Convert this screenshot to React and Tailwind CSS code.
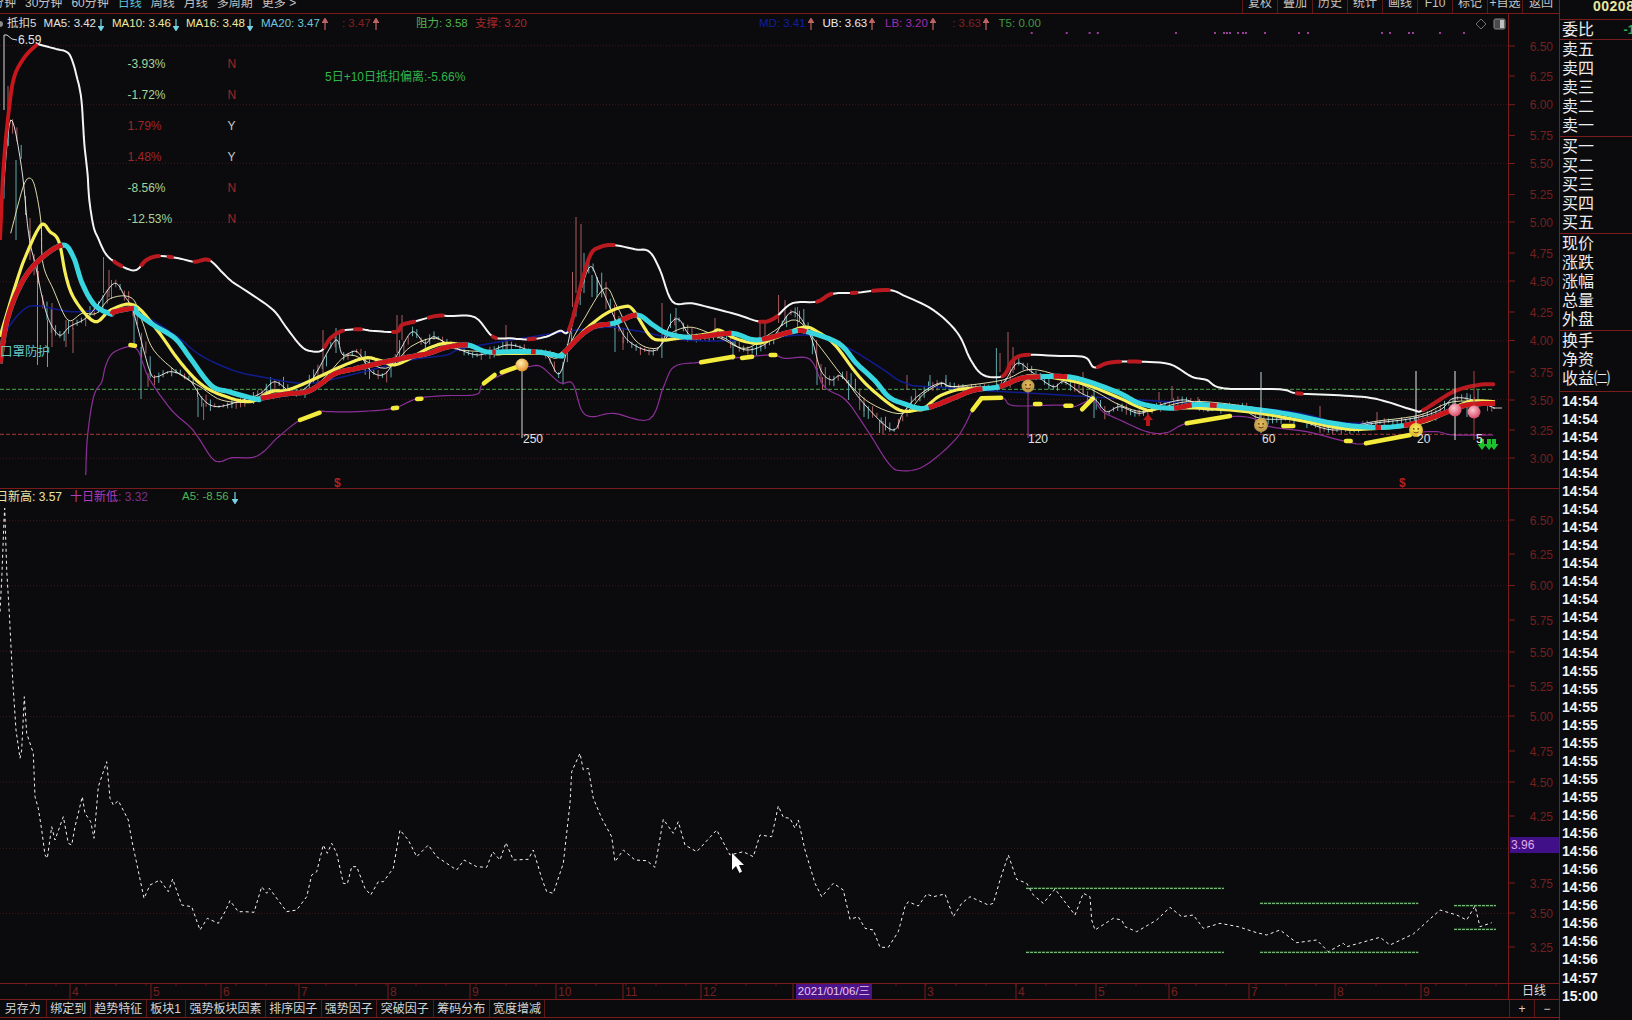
import React from "react";

const A = (p) => p.map(([x, y]) => [x / 2.8, y / 3]);
const B = (p) => p.map(([x, y]) => [x / 2.8, 240 + y / 3]);
const C = (p) => p.map(([x, y]) => [560 + x / 2.8, 240 + y / 3]);
const D = (p) => p.map(([x, y]) => [1120 + x / 3, 320 + y / 3]);
const bx = (v) => v / 2.8;
const cx = (v) => 560 + v / 2.8;
const dx = (v) => 1120 + v / 3;

function dense(pts) {
  const out = [];
  for (let i = 0; i < pts.length - 1; i++) {
    const p0 = pts[Math.max(i - 1, 0)];
    const p1 = pts[i];
    const p2 = pts[i + 1];
    const p3 = pts[Math.min(i + 2, pts.length - 1)];
    for (let k = 0; k < 6; k++) {
      const t = k / 6;
      const f = (a, b, c, d) =>
        0.5 * (2 * b + (c - a) * t + (2 * a - 5 * b + 4 * c - d) * t * t + (3 * b - a - 3 * c + d) * t * t * t);
      out.push([f(p0[0], p1[0], p2[0], p3[0]), f(p0[1], p1[1], p2[1], p3[1])]);
    }
  }
  out.push(pts[pts.length - 1]);
  return out;
}
const str = (pts) => pts.map(([x, y]) => `${x.toFixed(1)},${y.toFixed(1)}`).join(" ");
const slice = (pts, a, b) => pts.filter(([x]) => x >= a && x <= b);
const at = (pts, x) => {
  for (let i = 0; i < pts.length - 1; i++) {
    if (pts[i][0] <= x && pts[i + 1][0] >= x) return pts[i][1];
  }
  return pts[pts.length - 1][1];
};

const band = dense([
  ...A([[105,132],[150,145],[185,155],[200,175],[215,230],[228,300],[236,430],[245,520],[250,600],[262,680],[275,715]]),
  ...B([[295,40],[320,65],[360,88],[385,88],[410,60],[445,48],[500,55],[545,65],[585,60],[625,100],[650,125],[700,160],[765,210],[800,260],[840,315],[865,332],[900,332],[925,295],[960,272],[1010,268],[1040,272],[1110,275],[1125,255],[1160,245],[1220,228],[1260,228],[1330,232],[1380,290],[1430,295],[1480,298],[1530,290]]),
  ...C([[0,272],[25,270],[60,130],[85,45],[110,22],[150,15],[210,28],[250,35],[280,90],[315,185],[370,190],[440,208],[500,225],[560,245],[600,235],[650,190],[720,185],[760,162],[830,158],[920,150],[970,170],[1030,200],[1080,240],[1120,290],[1150,360],[1185,405],[1240,408],[1265,365],[1300,345],[1400,348],[1470,352],[1495,382],[1530,370]]),
  ...D([[0,125],[60,125],[150,133],[215,170],[260,180],[310,205],[480,208],[530,220],[640,225],[740,232],[800,245],[880,270],[910,270],[1000,215],[1075,195],[1120,193]]),
]);
const bandRed = [
  [bx(320),bx(345)],[bx(395),bx(445)],[bx(465),bx(490)],[bx(545),bx(585)],[bx(905),bx(965)],[bx(990),bx(1015)],[bx(1090),bx(1160)],[bx(1190),bx(1240)],[bx(1295),bx(1310)],[bx(1375),bx(1395)],[bx(1480),bx(1500)],
  [cx(25),cx(150)],[cx(560),cx(610)],[cx(720),cx(765)],[cx(805),cx(830)],[cx(865),cx(920)],[cx(1240),cx(1320)],[cx(1395),cx(1405)],[cx(1505),cx(1568)],
  [dx(25),dx(65)],[dx(530),dx(555)],[dx(620),dx(635)],[dx(910),dx(1120)],
];
const bandStart = dense(A([[0,720],[10,500],[25,330],[40,230],[70,170],[105,132]]));

const thick = dense([
  ...B([[0,370],[20,240],[60,130],[110,60],[175,15],[205,50],[230,130],[265,195],[310,222],[320,215],[375,205],[385,220],[430,255],[490,295],[530,350],[590,435],[640,455],[720,478],[730,475],[800,462],[860,455],[900,430],[940,400],[1000,385],[1060,370],[1140,352],[1200,340],[1250,322],[1310,315],[1360,335],[1420,335],[1500,335]]),
  ...C([[0,348],[10,340],[60,285],[100,258],[150,250],[215,225],[260,255],[300,280],[370,292],[480,280],[550,300],[650,275],[690,275],[780,310],[830,370],[880,420],[920,470],[960,490],[1020,505],[1100,475],[1160,450],[1230,440],[1290,415],[1345,410],[1420,410],[1480,425]]),
  ...D([[0,220],[60,250],[150,265],[215,255],[270,255],[420,270],[520,285],[640,310],[750,322],[840,318],[900,305],[970,280],[1040,255],[1125,250]]),
]);
const thickRed = [
  [0,bx(175)],[bx(312),bx(378)],[bx(730),bx(1312)],[bx(1370),bx(1395)],[bx(1480),bx(1510)],
  [cx(10),cx(148)],[cx(165),cx(222)],[cx(370),cx(482)],[cx(555),cx(650)],[cx(665),cx(695)],[cx(1025),cx(1190)],[cx(1230),cx(1345)],[cx(1375),cx(1420)],
  [dx(155),dx(215)],[dx(270),dx(312)],[dx(760),dx(790)],[dx(845),dx(1125)],
];
const yellow = dense([
  ...B([[0,290],[45,130],[75,40],[115,-45],[140,-25],[165,5],[185,110],[210,180],[265,245],[310,210],[375,195],[440,270],[500,360],[560,430],[620,465],[700,485],[760,455],[820,445],[1000,360],[1060,360],[1100,375],[1140,360],[1200,325],[1250,310],[1320,320],[1380,340],[1420,340],[1540,340]]),
  ...C([[0,345],[70,270],[130,220],[180,200],[205,210],[250,285],[280,300],[330,295],[420,280],[445,270],[490,295],[550,310],[600,295],[680,262],[720,275],[770,315],[830,400],[880,455],[950,510],[1000,510],[1020,505],[1060,470],[1110,450],[1160,445],[1230,440],[1300,410],[1340,408],[1420,420],[1490,440]]),
  ...D([[0,235],[80,270],[120,265],[250,265],[420,280],[640,320],[720,328],[900,310],[1020,255],[1060,243],[1125,245]]),
]);
const thin1 = dense([
  ...A([[10,560],[30,360],[60,500],[80,700]]),
  ...B([[100,80],[130,220],[165,285],[195,260],[240,235],[270,200],[320,130],[350,170],[370,205],[385,260],[420,395],[440,410],[480,395],[530,420],[570,480],[610,500],[680,480],[730,460],[770,425],[820,460],[860,440],[890,390],[940,300],[960,345],[1000,335],[1040,395],[1080,400],[1120,330],[1155,275],[1190,310],[1215,290],[1260,315],[1340,345],[1420,315],[1480,330],[1530,345]]),
  ...C([[0,400],[35,250],[80,85],[110,130],[160,250],[200,310],[270,330],[310,250],[335,240],[370,290],[450,290],[520,330],[590,300],[650,215],[700,285],[730,390],[760,420],[790,410],[850,490],[930,570],[960,520],[1000,470],[1060,430],[1100,440],[1200,440],[1240,430],[1280,370],[1320,395],[1380,440],[1410,425],[1460,460],[1500,480],[1530,515]]),
  ...D([[0,260],[60,280],[120,255],[200,240],[260,270],[350,260],[420,295],[530,300],[640,330],[760,310],[880,295],[960,270],[1000,235],[1060,240],[1125,265]]),
]);
const thin2 = dense([
  ...A([[30,700],[65,560],[85,535],[100,570],[115,670]]),
  ...B([[120,70],[150,150],[190,240],[230,220],[270,220],[310,175],[370,175],[400,250],[430,330],[500,400],[560,440],[620,480],[700,485],[760,450],[860,455],[920,400],[980,345],[1080,385],[1150,320],[1220,295],[1290,330],[1500,340]]),
  ...C([[0,350],[60,250],[125,145],[160,200],[210,300],[270,325],[310,280],[370,262],[450,295],[520,325],[590,280],[660,240],[720,310],[800,420],[870,490],[960,520],[1020,460],[1070,430],[1100,440],[1240,420],[1320,388],[1430,420],[1500,455]]),
  ...D([[0,255],[80,275],[200,245],[350,255],[520,285],[640,325],[760,305],[900,285],[1000,245],[1125,250]]),
]);
const navy = dense([
  ...B([[0,330],[20,270],[60,215],[100,197],[200,215],[300,210],[380,215],[490,285],[560,345],[650,390],[730,410],[860,430],[1000,400],[1150,360],[1250,345],[1320,320]]),
  ...C([[90,265],[200,270],[350,300],[530,300],[700,285],[800,320],[900,385],[970,430],[1100,445]]),
  ...D([[420,265],[640,305],[760,310]]),
]);
const purple = dense([
  ...B([[240,705],[245,590],[262,470],[285,425],[295,380],[315,340],[360,320],[385,330],[400,370],[420,420],[480,510],[540,570],[590,650],[615,665],[650,653],[720,648],[780,590],[840,540],[895,515],[920,515],[1000,515],[1100,505],[1170,475],[1250,467],[1335,463],[1355,430],[1450,385],[1480,380],[1515,380]]),
  ...C([[0,428],[35,430],[60,510],[90,530],[150,520],[250,538],[290,440],[320,380],[390,367],[480,355],[590,345],[630,355],[700,358],[740,440],[800,480],[860,570],[920,670],[955,692],[1020,678],[1110,595],[1155,510],[1180,475],[1240,475],[1270,497],[1400,495],[1440,500],[1490,480],[1520,515]]),
  ...D([[0,300],[80,335],[140,338],[200,310],[330,290],[400,295],[450,320],[560,335],[680,365],[740,370],[880,340],[950,335],[1000,345],[1120,345]]),
]);
const yellowBits = [
  B([[365,315],[378,317]]), B([[840,540],[895,518]]), B([[1100,505],[1112,503]]), B([[1168,477],[1180,476]]),
  B([[1355,430],[1385,405]]), B([[1405,397],[1450,380]]),
  C([[395,367],[485,350]]), C([[510,354],[538,350]]), C([[590,345],[603,345]]),
  C([[1155,510],[1180,475],[1235,473]]), C([[1330,492],[1345,492]]), C([[1415,497],[1432,497]]), C([[1462,508],[1492,475]]),
  D([[200,310],[330,288]]), D([[490,318],[520,318]]), D([[678,363],[692,363]]), D([[738,370],[870,345]]),
];

const R = "#a85f5f";
const G = "#5fa9ad";
const tallBars = [
  [8,86,110,R],[16,160,240,G],[30,218,260,R],[37.5,263,365,G],[47.5,320,367,G],[52,303,347,R],[66,320,347,R],[73,328,353,R],[103.5,257,293,R],[109,270,297,R],[134,312,347,G],[141,347,399,G],[148,373,387,R],[198,397,417,G],[203.6,403,420,R],[323,330,373,R],[336,328,353,G],[397,315,353,R],[402,315,340,R],[506,325,353,R],
  [576,217,293,R],[581,224,283,R],[572.5,272,307,R],[584,253,293,G],[592,275,297,G],[597,277,297,G],[615,320,352,G],[623,337,350,R],[662,303,340,R],[676,308,337,G],[715,318,337,R],[733,340,360,G],[760,320,343,R],[765,323,347,R],[778.6,295,323,R],[785,300,323,R],[797.5,307,333,R],[817,368,385,G],[822.5,377,390,R],[848.6,380,400,G],[864,403,417,G],[879.6,420,433,G],[883,421,434,R],[907,375,390,R],[930,375,387,G],[946,375,387,G],[996.4,348,387,G],[1000,353,372,R],[1008,332,370,R],[1013,347,373,R],[1094,390,418,G],[1083,372,393,R],
  [1159,392,403,R],[1172,386,400,R],[1198,397,407,R],[1320,406,433,R],[1377,412,427,R],[1467,393,417,G],[1478,390,417,G],
];
function makeBars() {
  let s = 7;
  const rnd = () => (s = (s * 9301 + 49297) % 233280) / 233280;
  const out = [];
  for (let x = 4; x < 1495; x += 4.3) {
    const y = at(thin1, x);
    const vol = Math.min(26, Math.abs(at(thin1, x + 5) - at(thin1, x - 5)));
    const up = 1 + rnd() * (3 + vol * 0.5);
    const dn = 1 + rnd() * (4 + vol * 0.6);
    out.push([x, y - up, y + dn, rnd() > 0.55 ? R : G]);
  }
  return out;
}
const bars = makeBars();

const z9 = (p) => p.map(([x, y]) => [x / 3, 480 + y / 3]);
const z10 = (p) => p.map(([x, y]) => [500 + x / 3, 720 + y / 3]);
const z11 = (p) => p.map(([x, y]) => [1000 + x / 3, 820 + y / 3]);
const dashLine = [
  ...z9([[0,395],[5,300],[12,120],[14,85],[20,270],[28,400],[38,600],[48,750],[60,835],[65,810],[73,650],[80,760],[100,820],[105,950],[115,985],[125,1050],[135,1125],[142,1135],[155,1040],[165,1080],[190,1010],[205,1090],[215,1095],[225,1040],[247,950],[255,1000],[272,1025],[282,1075],[295,920],[320,845],[330,955],[340,975],[355,962],[385,1020],[395,1080],[410,1150],[432,1255],[450,1215],[480,1200],[505,1235],[518,1197],[545,1275],[575,1280],[600,1350],[622,1315],[655,1330],[675,1295],[690,1262],[715,1295],[735,1295],[762,1297],[785,1220],[800,1240],[808,1225],[860,1295],[890,1290],[920,1250],[935,1185],[950,1175],[970,1095],[982,1120],[995,1090],[1010,1120],[1030,1210],[1042,1212],[1055,1160],[1070,1160],[1095,1225],[1112,1245],[1135,1205],[1150,1205],[1180,1165],[1200,1050],[1225,1080],[1250,1130],[1285,1095],[1310,1130],[1370,1170],[1392,1140],[1430,1160],[1460,1162],[1478,1115]]),
  ...z10([[0,420],[18,368],[40,420],[85,418],[100,390],[125,475],[140,515],[160,520],[190,430],[210,250],[215,155],[240,100],[250,150],[265,145],[280,235],[305,295],[335,350],[345,425],[370,390],[405,420],[440,422],[465,442],[490,298],[520,340],[535,305],[555,375],[590,395],[650,330],[690,405],[730,395],[760,410],[780,345],[815,350],[835,258],[850,292],[870,295],[885,325],[895,300],[915,390],[945,490],[965,530],[1000,490],[1030,510],[1050,598],[1075,590],[1095,625],[1120,630],[1140,682],[1165,682],[1195,635],[1215,560],[1225,545],[1255,558],[1280,522],[1300,530],[1335,522],[1360,590],[1385,550],[1410,530],[1465,555],[1480,550]]),
  ...z11([[0,180],[25,105],[50,178],[80,190],[100,225],[130,250],[165,207],[225,285],[250,220],[270,230],[275,300],[285,330],[340,295],[365,300],[375,320],[410,335],[470,300],[510,262],[545,290],[580,285],[610,325],[660,310],[715,320],[770,338],[800,345],[840,330],[890,368],[950,360],[985,395],[1030,370],[1040,380],[1140,352],[1170,375],[1240,342],[1320,270],[1370,285],[1400,300],[1425,258],[1440,320],[1475,308]]),
];
const greenLines = [[78,672,205],[78,672,397],[780,1255,250],[780,1255,397],[1362,1488,257],[1362,1488,328]];

const dots = [1030.7,1065.7,1088.6,1096.8,1175,1214,1223,1226,1229,1237,1242,1245,1264,1298,1307,1381,1389,1408,1412,1439,1463];
const upGrid = [45.7,104.7,163.3,222.3,281.7,341,399.3,458.3];
const loGrid = [520.7,585.7,651,716.7,782,848.3,913.3];
const upLabels = [["6.50",46],["6.25",76],["6.00",104.7],["5.75",135.5],["5.50",163.5],["5.25",194.6],["5.00",222],["4.75",253],["4.50",281],["4.25",312],["4.00",340.5],["3.75",372],["3.50",400],["3.25",430],["3.00",458]];
const loLabels = [["6.50",520],["6.25",554],["6.00",585.5],["5.75",620],["5.50",652],["5.25",686],["5.00",716],["4.75",751],["4.50",782],["4.25",816],["3.75",883],["3.50",913],["3.25",947]];

function Arrow({ up, color }) {
  return (
    <svg width="6" height="13" viewBox="0 0 6 13" className="inline-block shrink-0">
      {up ? (
        <path d="M3 12V3M3 0.5L5.5 4.5H0.5Z" stroke={color} strokeWidth="1.2" fill={color} />
      ) : (
        <path d="M3 1V10M3 12.5L5.5 8.5H0.5Z" stroke={color} strokeWidth="1.2" fill={color} />
      )}
    </svg>
  );
}

const UP = "#c26464";
const DN = "#74d4e4";
const legend = [
  { w: "w-[36.6px]", parts: [["抵扣5", "#dcdcdc"]] },
  { w: "w-[68.4px]", parts: [["MA5: 3.42", "#e2e2e2"]], a: [0, DN] },
  { w: "w-[74px]", parts: [["MA10: 3.46", "#f0eaa0"]], a: [0, DN] },
  { w: "w-[75px]", parts: [["MA16: 3.48", "#f0eaa0"]], a: [0, DN] },
  { w: "w-[81px]", parts: [["MA20: 3.47", "#70c6da"]], a: [1, UP] },
  { w: "w-[74px]", parts: [[": 3.47", "#842020"]], a: [1, UP] },
  { w: "w-[59px]", parts: [["阻力: 3.58", "#4fb54f"]] },
  { w: "w-[284px]", parts: [["支撑: 3.20", "#a82828"]] },
  { w: "w-[63.5px]", parts: [["MD: 3.41", "#101f9c"]], a: [1, UP] },
  { w: "w-[62.5px]", parts: [["UB: 3.63", "#ececec"]], a: [1, UP] },
  { w: "w-[64px]", parts: [["LB: 3.20", "#9c2fae"]], a: [1, UP] },
  { w: "w-[49.6px]", parts: [[" : 3.63", "#842020"]], a: [1, UP] },
  { w: "w-[60px]", parts: [["T5: 0.00", "#3f9a3f"]] },
];

const pct = [
  ["-3.93%", "N", "#a4d49a", "#a02626"],
  ["-1.72%", "N", "#a4d49a", "#a02626"],
  ["1.79%", "Y", "#a02626", "#c8c8c8"],
  ["1.48%", "Y", "#a02626", "#c8c8c8"],
  ["-8.56%", "N", "#a4d49a", "#a02626"],
  ["-12.53%", "N", "#a4d49a", "#a02626"],
];

function Ball({ x, y, r, id, face }) {
  return (
    <g>
      <circle cx={x} cy={y} r={r} fill={`url(#${id})`} />
      {face && (
        <g>
          <circle cx={x - 2.2} cy={y - 1.2} r="0.9" fill="#6b3a10" />
          <circle cx={x + 2.2} cy={y - 1.2} r="0.9" fill="#6b3a10" />
          <path d={`M${x - 2.5} ${y + 2}Q${x} ${y + 4} ${x + 2.5} ${y + 2}`} stroke="#6b3a10" fill="none" />
        </g>
      )}
    </g>
  );
}

function UpperChart() {
  return (
    <svg width="1508" height="474" viewBox="0 14 1508 474" className="block">
      <defs>
        <radialGradient id="b-orange" cx="0.4" cy="0.35" r="0.7">
          <stop offset="0" stopColor="#fff0b0" />
          <stop offset="1" stopColor="#e08a20" />
        </radialGradient>
        <radialGradient id="b-yellow" cx="0.5" cy="0.4" r="0.7">
          <stop offset="0" stopColor="#f8f060" />
          <stop offset="1" stopColor="#d8a820" />
        </radialGradient>
        <radialGradient id="b-pink" cx="0.4" cy="0.35" r="0.7">
          <stop offset="0" stopColor="#f8c8d0" />
          <stop offset="1" stopColor="#d84060" />
        </radialGradient>
        <radialGradient id="b-tan" cx="0.5" cy="0.4" r="0.7">
          <stop offset="0" stopColor="#e8c060" />
          <stop offset="1" stopColor="#a88840" />
        </radialGradient>
      </defs>
      {upGrid.map((y) => (
        <line key={y} x1="0" x2="1508" y1={y} y2={y} stroke="#451818" strokeDasharray="1 2" />
      ))}
      <line x1="0" x2="1493" y1="389.3" y2="389.3" stroke="#4aa84a" strokeDasharray="4 2" />
      <line x1="0" x2="1493" y1="434.3" y2="434.3" stroke="#a83a3a" strokeDasharray="4 2" />
      <line x1="1493" x2="1502" y1="408" y2="408" stroke="#c8c8c8" />
      {dots.map((x) => (
        <rect key={x} x={x} y="32" width="2" height="2" fill="#9a3e9a" />
      ))}
      <path d="M1481 19l5 5-5 5-5-5z" fill="none" stroke="#707070" />
      <rect x="1494" y="19" width="11" height="10" rx="1.5" fill="#4a4a4a" stroke="#8a8a8a" />
      <rect x="1500" y="20" width="4" height="8" fill="#c0c0c0" />
      <polyline points="4,110 4,35 7,35 12,39 17,40" fill="none" stroke="#d8d8d8" />
      {bars.map((b, i) => (
        <line key={i} x1={b[0]} x2={b[0]} y1={b[1]} y2={b[2]} stroke={b[3]} />
      ))}
      {tallBars.map((b, i) => (
        <line key={i} x1={b[0]} x2={b[0]} y1={b[1]} y2={b[2]} stroke={b[3]} />
      ))}
      <polyline points={str(navy)} fill="none" stroke="#101c8c" strokeWidth="1.5" />
      <polyline points={str(purple)} fill="none" stroke="#8d2f98" strokeWidth="1.2" />
      {yellowBits.map((p, i) => (
        <polyline key={i} points={str(p)} fill="none" stroke="#f4ec3c" strokeWidth="4.5" strokeLinecap="round" strokeLinejoin="round" />
      ))}
      <polyline points={str(thin2)} fill="none" stroke="#f3efb8" strokeWidth="0.9" />
      <polyline points={str(thin1)} fill="none" stroke="#f4f4f4" strokeWidth="0.9" />
      <polyline points={str(yellow)} fill="none" stroke="#f6ee58" strokeWidth="3.2" strokeLinejoin="round" />
      <polyline points={str(thick)} fill="none" stroke="#38d6de" strokeWidth="5" strokeLinejoin="round" />
      {thickRed.map(([a, b], i) => (
        <polyline key={i} points={str(slice(thick, a, b))} fill="none" stroke="#cc161c" strokeWidth="5" strokeLinejoin="round" />
      ))}
      <polyline points={str(band)} fill="none" stroke="#f4f4f4" strokeWidth="2" strokeLinejoin="round" />
      <polyline points={str(bandStart)} fill="none" stroke="#c8161c" strokeWidth="3.8" strokeLinejoin="round" />
      {bandRed.map(([a, b], i) => (
        <polyline key={i} points={str(slice(band, a, b))} fill="none" stroke="#b81a20" strokeWidth="4" strokeLinecap="round" strokeLinejoin="round" />
      ))}
      <line x1="522" x2="522" y1="366" y2="438" stroke="#d8d8d8" />
      <Ball x={522} y={365} r={6.5} id="b-orange" />
      <line x1="1028" x2="1028" y1="385" y2="438" stroke="#a03aa8" />
      <Ball x={1028} y={386} r={6.5} id="b-tan" face />
      <line x1="1261" x2="1261" y1="372" y2="433" stroke="#bcd8d8" />
      <Ball x={1261} y={425} r={7} id="b-tan" face />
      <line x1="1416" x2="1416" y1="371" y2="432" stroke="#e8e8e8" />
      <Ball x={1416} y={430} r={7} id="b-yellow" face />
      <line x1="1455" x2="1455" y1="371" y2="440" stroke="#e8e8e8" />
      <Ball x={1455} y={410} r={6.5} id="b-pink" />
      <line x1="1474" x2="1474" y1="371" y2="440" stroke="#a84040" />
      <Ball x={1474} y={412} r={6.5} id="b-pink" />
      <path d="M1148 414l-5 6h3v6h4v-6h3z" fill="#b81818" />
      {[1482, 1489, 1494].map((x) => (
        <path key={x} d={`M${x} 450l-4.5-6h2.5v-5h4v5h2.5z`} fill="#1fc02f" />
      ))}
      <g fontSize="12" fill="#e4e4e4">
        <text x="18" y="44">6.59</text>
        <text x="523" y="443">250</text>
        <text x="1028" y="443">120</text>
        <text x="1262" y="443">60</text>
        <text x="1417" y="443">20</text>
        <text x="1476" y="443">5</text>
      </g>
      <text x="0" y="356" fontSize="12.5" fill="#68c4c4">口罩防护</text>
      <g fontSize="12" fontWeight="700" fill="#b42020">
        <text x="334" y="487">$</text>
        <text x="1399" y="487">$</text>
      </g>
    </svg>
  );
}

function LowerChart() {
  return (
    <svg width="1508" height="494" viewBox="0 489 1508 494" className="block">
      {loGrid.map((y) => (
        <line key={y} x1="0" x2="1508" y1={y} y2={y} stroke="#451818" strokeDasharray="1 2" />
      ))}
      {greenLines.map(([a, b, y], i) => {
        const x1 = 1000 + a / 3;
        const x2 = 1000 + b / 3;
        const yy = 820 + y / 3;
        return (
          <g key={i}>
            <line x1={x1} x2={x2} y1={yy} y2={yy} stroke="#0d2a10" strokeWidth="3" />
            <line x1={x1} x2={x2} y1={yy} y2={yy} stroke="#8fce8f" strokeDasharray="3 1" />
          </g>
        );
      })}
      <polyline points={str(dashLine)} fill="none" stroke="#f4f4f4" strokeDasharray="3 3" />
      <path d="M732 853V870L736 866L739.5 873L742 871.5L739 865H744Z" fill="#ffffff" />
    </svg>
  );
}

function Axis({ labels, y0, h, minor }) {
  return (
    <svg width="50" height={h} viewBox={`1509 ${y0} 50 ${h}`} className="block">
      {labels.map(([t, y]) => (
        <g key={t}>
          {minor && <line x1="1509" x2="1515" y1={y} y2={y} stroke="#7a1c1c" />}
          <text x="1553" y={y + 4.5} textAnchor="end" fontSize="12" fill="#74201f">{t}</text>
        </g>
      ))}
    </svg>
  );
}

const datesLabels = [["4",71],["5",152],["6",222],["7",300],["8",389],["9",471],["10",557],["11",624],["12",702],["3",926],["4",1017],["5",1097],["6",1170],["7",1250],["8",1336],["9",1422]];
const seps = [70,151,221,299,388,470,556,623,701,793,925,1016,1096,1169,1249,1335,1421];
const ticks = Array.from({ length: 50 }, (_, i) => 26 + i * 30);

const topL = ["分钟", "30分钟", "60分钟", "日线", "周线", "月线", "多周期", "更多 >"];
const topR = ["复权", "叠加", "历史", "统计", "画线", "F10", "标记", "+自选", "返回"];
const bottom = [
  ["另存为", "w-[46.7px]"], ["绑定到", "w-[44px]"], ["趋势特征", "w-[56px]"], ["板块1", "w-[39px]"], ["强势板块因素", "w-[80.4px]"],
  ["排序因子", "w-[55.5px]"], ["强势因子", "w-[55.5px]"], ["突破因子", "w-[56.6px]"], ["筹码分布", "w-[56.4px]"], ["宽度增减", "w-[55px]"],
];
const rows1 = ["卖五", "卖四", "卖三", "卖二", "卖一"];
const rows2 = ["买一", "买二", "买三", "买四", "买五"];
const rows3 = ["现价", "涨跌", "涨幅", "总量", "外盘"];
const rows4 = ["换手", "净资", "收益㈡"];
const times = [
  ...Array(15).fill("14:54"), ...Array(8).fill("14:55"), ...Array(9).fill("14:56"), "14:57", "15:00",
];

function Col({ items, cls }) {
  return (
    <div className={cls}>
      {items.map((t) => (
        <div key={t} className="h-[19px] text-[16px] leading-[19px] text-[#ececec]">{t}</div>
      ))}
    </div>
  );
}

export default function App() {
  return (
    <div className="flex h-[1020px] w-[1632px] overflow-hidden bg-[#0b0b0e] font-['Liberation_Sans','Noto_Sans_CJK_SC',sans-serif]">
      <div className="flex w-[1560px] shrink-0 flex-col border-r border-[#7a1c1c]">
        <div className="flex h-[14px] shrink-0 items-start justify-between overflow-hidden border-b border-[#7a1c1c] text-[12px] leading-[13px] text-[#c4c4c4]">
          <div className="-ml-[8px] -mt-[3px] flex gap-[9px] whitespace-nowrap">
            {topL.map((t) => (
              <span key={t} className={t === "日线" ? "text-[#5cc0d8]" : ""}>{t}</span>
            ))}
          </div>
          <div className="flex">
            {topR.map((t, i) => (
              <div key={t} className={`-mt-[3px] flex h-[16px] items-start justify-center border-l border-[#5a1818] pt-0 whitespace-nowrap ${i === 8 ? "w-[37px]" : "w-[35px]"}`}>
                {t}
              </div>
            ))}
          </div>
        </div>

        <div className="flex h-[475px] shrink-0 border-b border-[#7a1c1c]">
          <div className="relative w-[1509px] shrink-0 overflow-hidden border-r border-[#7a1c1c]">
            <UpperChart />
            <div className="absolute left-0 top-0 flex h-[20px] items-center whitespace-pre text-[11.5px]">
              <span className="-ml-[3px] mr-[4px] h-[6px] w-[6px] rounded-full bg-[#8a8a8a]" />
              {legend.map((l, i) => (
                <span key={i} className={`flex items-center ${l.w}`}>
                  <span style={{ color: l.parts[0][1] }}>{l.parts[0][0]}</span>
                  {l.a && (
                    <span className="ml-[2px] flex">
                      <Arrow up={!!l.a[0]} color={l.a[1]} />
                    </span>
                  )}
                </span>
              ))}
            </div>
            <div className="absolute left-[127.5px] top-[34.5px] grid grid-cols-[100px_20px] text-[12px]">
              {pct.map(([v, f, c1, c2]) => (
                <React.Fragment key={v}>
                  <div className="flex h-[31px] items-center" style={{ color: c1 }}>{v}</div>
                  <div className="flex h-[31px] items-center" style={{ color: c2 }}>{f}</div>
                </React.Fragment>
              ))}
            </div>
            <div className="absolute left-[325px] top-[55px] whitespace-nowrap text-[12px] leading-[16px] text-[#2fb54a]">5日+10日抵扣偏离:-5.66%</div>
          </div>
          <div className="w-[50px]">
            <Axis labels={upLabels} y0={14} h={474} minor />
          </div>
        </div>

        <div className="flex h-[495px] shrink-0 border-b border-[#7a1c1c]">
          <div className="relative w-[1509px] shrink-0 overflow-hidden border-r border-[#7a1c1c]">
            <LowerChart />
            <div className="absolute left-0 top-0 flex h-[16px] items-center whitespace-pre text-[12px]">
              <span className="-ml-[16px] w-[86px] text-[#ece4a4]">十日新高: 3.57</span>
              <span className="w-[112px] text-[#b23cb8]">十日新低<span className="text-[#7d2f8a]">: 3.32</span></span>
              <span className="text-[11.5px] text-[#4fb54f]">A5: -8.56</span>
              <span className="ml-[3px] flex"><Arrow up={false} color={DN} /></span>
            </div>
          </div>
          <div className="relative w-[50px]">
            <Axis labels={loLabels} y0={489} h={494} minor />
            <div className="absolute left-[1px] right-0 top-[348px] flex h-[16px] items-center bg-[#3f1088] pl-[1px] text-[12px] text-[#e8a8e8]">3.96</div>
          </div>
        </div>

        <div className="flex h-[16px] shrink-0 border-b border-[#7a1c1c]">
          <div className="relative w-[1509px] shrink-0 overflow-hidden border-r border-[#7a1c1c]">
            <svg width="1508" height="15" viewBox="0 984 1508 15" className="block">
              {ticks.map((x) => (
                <line key={x} x1={x} x2={x} y1="984" y2="986" stroke="#5a1818" />
              ))}
              {seps.map((x) => (
                <line key={x} x1={x} x2={x} y1="984" y2="999" stroke="#7a1c1c" />
              ))}
              {datesLabels.map(([t, x], i) => (
                <text key={i} x={x + 1} y="996" fontSize="12" fill="#74201f">{t}</text>
              ))}
            </svg>
            <div className="absolute left-[796px] top-0 flex h-[15px] w-[76px] items-center justify-center whitespace-nowrap bg-[#4a1488] text-[11.5px] text-[#e8c8f0]">2021/01/06/三</div>
          </div>
          <div className="flex w-[50px] items-center justify-center text-[12px] leading-[15px] text-[#dcdcdc]">日线</div>
        </div>

        <div className="flex h-[18px] shrink-0 border-b border-[#7a1c1c] text-[12px] leading-[16px] text-[#d4d4d4]">
          {bottom.map(([t, w]) => (
            <div key={t} className={`flex items-center justify-center whitespace-nowrap border-r border-[#5a1818] ${w}`}>{t}</div>
          ))}
          <div className="flex-1" />
          <div className="flex w-[25px] items-center justify-center border-l border-[#5a1818]">+</div>
          <div className="flex w-[25px] items-center justify-center border-l border-[#5a1818]">−</div>
        </div>
      </div>

      <div className="flex w-[72px] flex-col overflow-hidden whitespace-nowrap">
        <div className="h-[19px] pl-[33px] text-[14px] font-bold leading-[13px] tracking-[0.5px] text-[#e8e6a0]">00208</div>
        <div className="flex h-[20px] items-start justify-between border-t border-[#7a1c1c] pl-[2px] text-[16px] leading-[19px] text-[#ececec]">
          <span>委比</span>
          <span className="mr-[-3px] text-[13px] font-bold text-[#2fb34a]">-1</span>
        </div>
        <Col items={rows1} cls="h-[97px] border-t border-[#7a1c1c] pl-[2px]" />
        <Col items={rows2} cls="h-[97px] border-t border-[#7a1c1c] pl-[2px]" />
        <Col items={rows3} cls="h-[97px] border-t border-[#7a1c1c] pl-[2px]" />
        <Col items={rows4} cls="h-[61px] border-t border-[#7a1c1c] pl-[2px]" />
        <div className="border-t border-[#7a1c1c] pl-[2px]">
          {times.map((t, i) => (
            <div key={i} className="h-[18.03px] text-[14px] font-bold leading-[18px] text-[#f4f4f4]">{t}</div>
          ))}
        </div>
      </div>
    </div>
  );
}
